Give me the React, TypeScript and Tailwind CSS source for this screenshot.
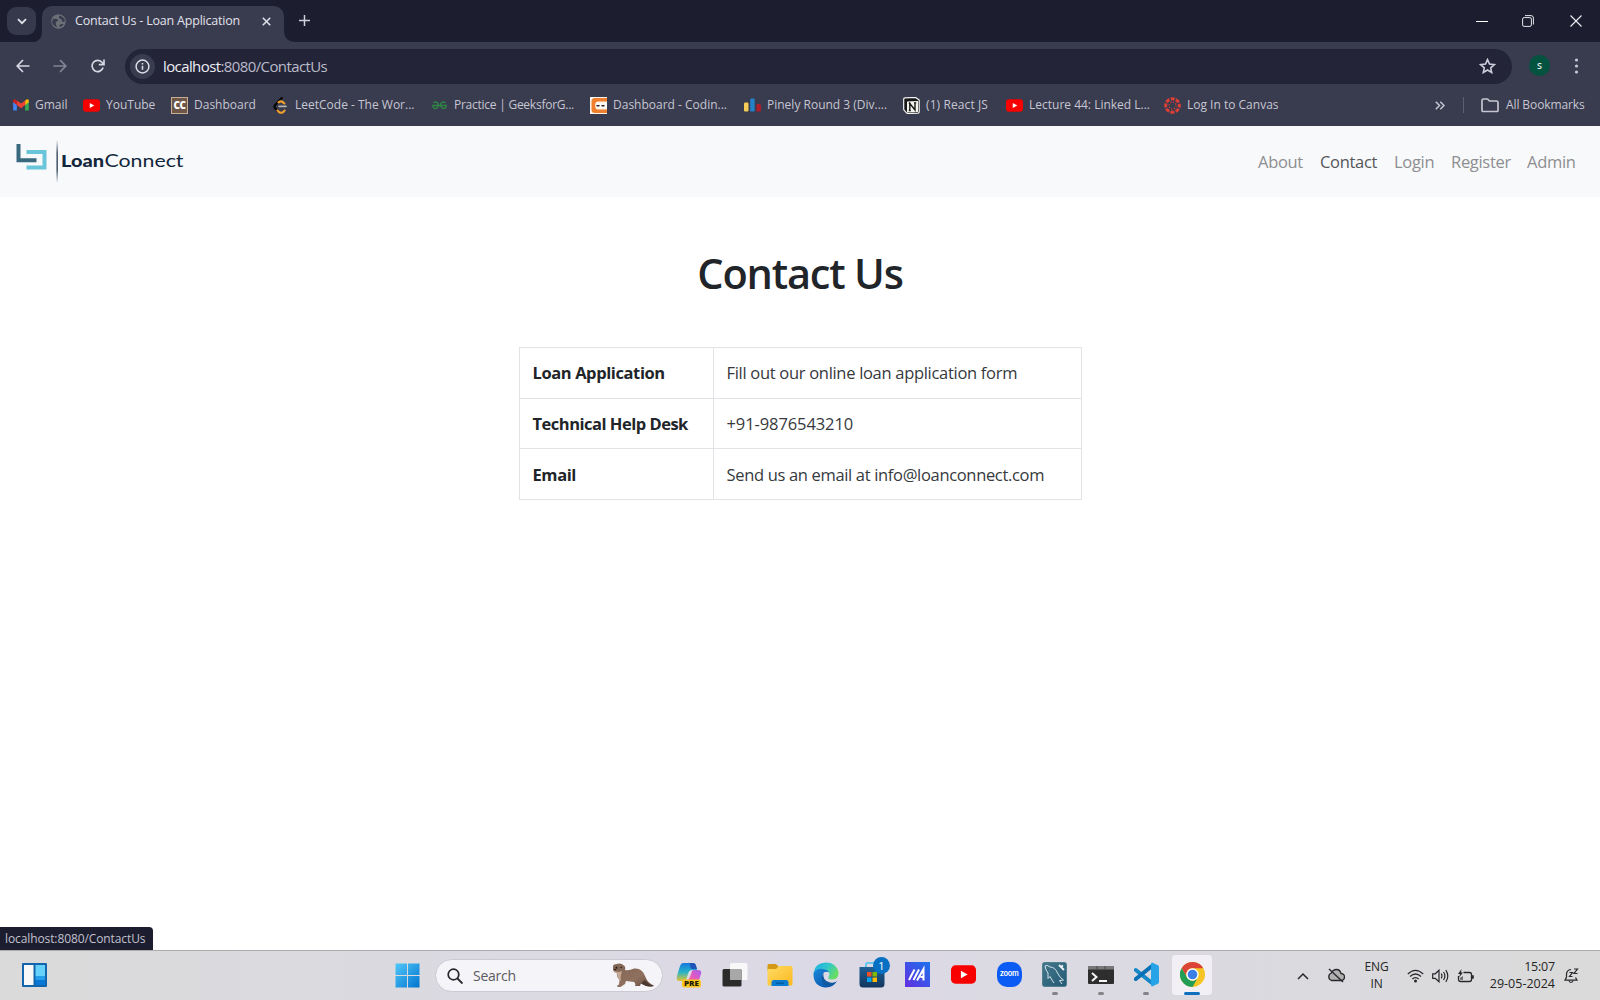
import type { ReactNode } from "react";

const Svg = ({ w, h = w, box, children }: { w: number; h?: number; box: string; children: ReactNode }) => (
  <svg width={w} height={h} viewBox={box} fill="none" className="shrink-0">{children}</svg>
);

const YouTube = ({ w, h }: { w: number; h: number }) => (
  <Svg w={w} h={h} box="0 0 26 19">
    <rect width="26" height="19" rx="4.5" fill="#f90000" />
    <path d="M10.3 5.6v7.8l7-3.9z" fill="#fff" />
  </Svg>
);

const Gmail = () => (
  <Svg w={16} h={12} box="0 0 17 13">
    <path d="M0 3v8.5Q0 12.5 1 12.5H4V5.5z" fill="#4285f4" />
    <path d="M13 5.5v7h3q1 0 1-1V3z" fill="#34a853" />
    <path d="M13 1.5L14.4.6Q17-.6 17 2.3V3.5L13 6.6z" fill="#fbbc04" />
    <path d="M4 1.5L8.5 5 13 1.5V6.6L8.5 10 4 6.6z" fill="#ea4335" />
    <path d="M0 3.5V2.3Q0-.6 2.6.6L4 1.5V6.6z" fill="#c5221f" />
  </Svg>
);

const CodeChef = () => (
  <div className="flex size-[17px] items-center justify-center border border-[#c9ad93] bg-[#6c5748] font-['Open_Sans',sans-serif] text-[10px] leading-none font-extrabold tracking-[-0.6px] text-white">CC</div>
);

const LeetCode = () => (
  <Svg w={16} h={17} box="0 0 16 17">
    <path d="M8.700 1L2 8.200Q.8 9.600 2 11L4.300 13.400" stroke="#050505" strokeWidth="2.200" strokeLinecap="round" />
    <path d="M4.500 13.400l1.600 1.700q2 1.400 4 0l1.500-1.500M5.500 5.300q2.500-1.800 4.300-.2l1.600 1.400" stroke="#f0a02b" strokeWidth="2.100" strokeLinecap="round" />
    <path d="M6 9.300h7" stroke="#b3b3b3" strokeWidth="1.800" strokeLinecap="round" />
  </Svg>
);

const Geeks = () => (
  <Svg w={15} h={9} box="0 0 15 9">
    <path d="M1.500 1.800Q3.500.2 5.300 1.600 7 3.200 6 5.600 4.600 8 2.500 7.300.8 6.600.7 4.500H14.300Q14.200 6.600 12.500 7.300 10.400 8 9 5.600 8 3.200 9.700 1.600 11.500.2 13.500 1.800" stroke="#2d8544" strokeWidth="1.400" />
  </Svg>
);

const CodingNinjas = () => (
  <Svg w={17} box="0 0 17 17">
    <rect width="17" height="17" fill="#fbf4ec" />
    <path d="M1.500 4.500Q1.500 1 5 1H17V4.500H8Q5.500 4.500 5.500 7v3q0 2.500 2.500 2.500H17V16H5Q1.500 16 1.500 12.500z" fill="#ef7f2d" />
    <path d="M5.500 6.500H17v4H5.500z" fill="#fff" />
    <path d="M6.500 8.300q1.500 1 3 0M11.500 8.300q1.500 1 3 0" stroke="#30211c" strokeWidth="1.500" />
  </Svg>
);

const Codeforces = () => (
  <Svg w={17} h={14} box="0 0 17 14">
    <rect y="4.500" width="4.500" height="9" rx="1.200" fill="#f5cd56" />
    <rect x="6.200" y=".5" width="4.500" height="13" rx="1.200" fill="#2482c8" />
    <rect x="12.400" y="6" width="4.500" height="7.500" rx="1.200" fill="#ae1e2b" />
  </Svg>
);

const Notion = () => (
  <Svg w={17} box="0 0 17 17">
    <path d="M.7 2Q.7 1 2 .9L12.500.4 16.200 3V15q0 1-1.200 1.100L5 16.600Q4 16.600 3.300 15.700L.7 12.600z" fill="#161616" stroke="#f4f4f4" strokeWidth="1.200" />
    <path d="M4 4.500L15 4V14.900L4 15.500z" fill="#f4f4ee" />
    <path d="M6.800 13.500V6.500l5.200 6.500V5.800M5.800 6.400h2M11 5.900h2.200M5.800 13.500h2" stroke="#161616" strokeWidth="1.400" />
  </Svg>
);

const Canvas = () => (
  <Svg w={17} box="0 0 17 17">
    <circle cx="8.500" cy="8.500" r="6.800" stroke="#dc3f35" strokeWidth="3" strokeDasharray="4 1.340" strokeDashoffset="2" />
    <circle cx="8.500" cy="8.500" r="3.500" stroke="#dc3f35" strokeWidth="1.300" strokeDasharray="1.100 1.649" />
  </Svg>
);

const Folder = () => (
  <Svg w={18} h={15} box="0 0 18 15">
    <path d="M1 12.500V2.500Q1 1 2.500 1H6.500L8.500 3H15.500Q17 3 17 4.500V12.500Q17 13.500 16 13.500H2Q1 13.500 1 12.500z" stroke="#c6c6d2" strokeWidth="1.700" strokeLinejoin="round" />
  </Svg>
);

const bookmarks: { name: string; cls: string; icon: ReactNode }[] = [
  { name: "Gmail", cls: "w-[71px]", icon: <Gmail /> },
  { name: "YouTube", cls: "w-[88px] tracking-[0px]", icon: <YouTube w={17} h={13} /> },
  { name: "Dashboard", cls: "w-[101px]", icon: <CodeChef /> },
  { name: "LeetCode - The Wor...", cls: "w-[159px] tracking-[0px]", icon: <LeetCode /> },
  { name: "Practice | GeeksforG...", cls: "w-[159px] tracking-[-0.25px]", icon: <Geeks /> },
  { name: "Dashboard - Codin...", cls: "w-[154px] tracking-[0px]", icon: <CodingNinjas /> },
  { name: "Pinely Round 3 (Div....", cls: "w-[159px] tracking-[0px]", icon: <Codeforces /> },
  { name: "(1) React JS", cls: "w-[103px] tracking-[0.1px]", icon: <Notion /> },
  { name: "Lecture 44: Linked L...", cls: "w-[158px]", icon: <YouTube w={17} h={13} /> },
  { name: "Log In to Canvas", cls: "w-[120px] tracking-[0px]", icon: <Canvas /> },
];

function TabStrip() {
  return (
    <div className="flex h-[42px] bg-[#1c1d2e]">
      <div className="mt-[7px] ml-[7px] flex h-7 w-[29px] items-center justify-center rounded-[9px] bg-[#36384b]">
        <Svg w={10} h={7} box="0 0 10 7"><path d="M1 1.200l4 4 4-4" stroke="#dedee8" strokeWidth="1.900" /></Svg>
      </div>
      <div className="flex h-full w-[261px] items-stretch">
        <Svg w={6} h={42} box="0 0 6 42"><path d="M-4 42Q6 42 6 31V42z" fill="#393b4e" /></Svg>
        <div className="mt-[6px] flex w-[242px] items-center rounded-t-[10px] bg-[#393b4e] pr-[13px] pb-[5px] pl-[9px]">
          <Svg w={15} box="0 0 15 15">
            <circle cx="7.500" cy="7.500" r="7.300" fill="#6c6f76" />
            <path d="M2 5q4-1 5 .8 0 2-2.200 2.200-.3 3 1.500 5.200Q2 12.500 1 8zM8.500 1.500q-1.700 2.500.8 3.200 2 .3 1.500 2.300 1 2 3.200.3Q13.500 3 8.500 1.500zM8.500 13q-.5-3 2.500-3l1.700.6Q11 13 8.500 13z" fill="#393b4e" />
          </Svg>
          <span className="ml-[9px] flex-1 text-[12.5px] tracking-[-0.2px] whitespace-nowrap text-[#e2e2ec]">Contact Us - Loan Application</span>
          <Svg w={9} box="0 0 9 9"><path d="M.8.8l7.400 7.400M8.200.8L.8 8.200" stroke="#dedee8" strokeWidth="1.600" /></Svg>
        </div>
        <Svg w={13} h={42} box="0 0 13 42"><path d="M0 30Q0 42 12 42H0z" fill="#393b4e" /></Svg>
      </div>
      <div className="mt-[15px] ml-[2px]">
        <Svg w={11} box="0 0 11 11"><path d="M5.500 0v11M0 5.500h11" stroke="#d0d0dc" strokeWidth="1.500" /></Svg>
      </div>
      <div className="mt-[14px] mr-[18px] ml-auto flex h-[13px] items-center">
        <Svg w={12} box="0 0 12 12"><path d="M0 6.500h12" stroke="#fff" strokeWidth="1" /></Svg>
        <div className="ml-[34px]">
          <Svg w={12} box="0 0 12 12"><rect x=".6" y="2.600" width="8.800" height="8.800" rx="1.500" stroke="#e6e6ec" /><path d="M3 .6h6Q11.400.6 11.400 3v6.500" stroke="#e6e6ec" /></Svg>
        </div>
        <div className="ml-9">
          <Svg w={12} box="0 0 12 12"><path d="M.5.5l11 11M11.500.5l-11 11" stroke="#f0f0f4" strokeWidth="1.100" /></Svg>
        </div>
      </div>
    </div>
  );
}

function Toolbar() {
  return (
    <div className="flex h-12 shrink-0 items-center bg-[#393b4e]">
      <div className="ml-[16px] flex w-[109px] items-center">
        <Svg w={14} box="0 0 14 14"><path d="M13.500 7H1.500M7 1L1.200 7 7 13" stroke="#d6d6e2" strokeWidth="1.700" /></Svg>
        <div className="ml-[23px]"><Svg w={14} box="0 0 14 14"><path d="M.5 7h12M7 1l5.800 6L7 13" stroke="#838594" strokeWidth="1.700" /></Svg></div>
        <div className="ml-[24px]"><Svg w={14} box="0 0 14 14"><path d="M12.100 8.500A5.600 5.600 0 1 1 11.200 3.600L12.500 5M13 .5V5.600H7.800" stroke="#d6d6e2" strokeWidth="1.700" /></Svg></div>
      </div>
      <div className="flex h-[35px] w-[1387px] items-center rounded-full bg-[#232438] pr-[16px] pl-[5px]">
        <div className="flex size-[25px] items-center justify-center rounded-full bg-[#393b4e]">
          <Svg w={15} box="0 0 15 15"><circle cx="7.500" cy="7.500" r="6.400" stroke="#dedee8" strokeWidth="1.500" /><path d="M7.500 6.700v4M7.500 3.900v1.500" stroke="#dedee8" strokeWidth="1.500" /></Svg>
        </div>
        <span className="ml-[8px] flex-1 text-[15px] tracking-[-0.6px] text-[#babbc8]"><span className="text-[#eeeef4]">localhost</span>:8080/ContactUs</span>
        <Svg w={17} h={16} box="0 0 17 16"><path d="M8.500 1.600L10.500 6.100 15.300 6.600 11.700 9.800 12.700 14.500 8.500 12 4.300 14.500 5.300 9.800 1.700 6.600 6.500 6.100z" stroke="#cccdda" strokeWidth="1.600" /></Svg>
      </div>
      <div className="mb-[1px] ml-[17px] flex size-[21px] items-center justify-center rounded-full bg-[#035340] text-[9px] font-semibold text-[#e8eeee]">S</div>
      <div className="ml-[24px]">
        <Svg w={5} h={16} box="0 0 5 16"><circle cx="2.500" cy="2" r="1.600" fill="#c8c9d5" /><circle cx="2.500" cy="8" r="1.600" fill="#c8c9d5" /><circle cx="2.500" cy="14" r="1.600" fill="#c8c9d5" /></Svg>
      </div>
    </div>
  );
}

function BookmarkBar() {
  return (
    <div className="flex h-9 shrink-0 items-start bg-[#393b4e] pl-[12px] text-[12px] text-[#c6c6d2]">
      {bookmarks.map((b) => (
        <div key={b.name} className={`flex h-[30px] shrink-0 items-center whitespace-nowrap ${b.cls}`}>
          <span className="flex w-[17px] shrink-0 justify-center">{b.icon}</span>
          <span className="ml-[6px]">{b.name}</span>
        </div>
      ))}
      <div className="mr-[14px] ml-auto flex h-[30px] items-center whitespace-nowrap">
        <Svg w={10} h={9} box="0 0 10 9"><path d="M.8.700l3.700 3.800L.8 8.300M5.300.700L9 4.500 5.300 8.300" stroke="#c6c6d2" strokeWidth="1.500" /></Svg>
        <div className="mr-[17px] ml-[18px] h-4 w-px bg-[#5d5f70]" />
        <Folder />
        <span className="ml-[7px] w-[80px] tracking-[-0.1px]">All Bookmarks</span>
      </div>
    </div>
  );
}

function Logo() {
  return (
    <div className="flex items-center">
      <Svg w={45} h={44} box="0 0 45 44">
        <defs>
          <linearGradient id="divider" x1="0" y1="0" x2="0" y2="1">
            <stop offset="0" stopColor="#26384e" stopOpacity="0" /><stop offset=".3" stopColor="#26384e" /><stop offset=".7" stopColor="#26384e" /><stop offset="1" stopColor="#26384e" stopOpacity="0" />
          </linearGradient>
        </defs>
        <path d="M10.500 13H28.500V28.500H10.500" transform="translate(0 -1)" stroke="#69c5d9" strokeWidth="4" />
        <path d="M2.500 4V20.300H20.500" stroke="#39697f" strokeWidth="4" />
        <rect x="40.500" y="0" width="1.300" height="43" fill="url(#divider)" />
      </Svg>
      <svg width="126" height="24" viewBox="0 0 126 24" className="-mt-[3px] overflow-visible font-['Lato',sans-serif]" fill="#12263c">
        <text x="0" y="18" fontSize="16.500" fontWeight="900" textLength="43" lengthAdjust="spacingAndGlyphs">Loan</text>
        <text x="43.500" y="18" fontSize="16.500" fontWeight="400" textLength="79" lengthAdjust="spacingAndGlyphs">Connect</text>
      </svg>
    </div>
  );
}

function Page() {
  return (
    <div className="flex min-h-0 flex-1 flex-col bg-white">
      <nav className="flex h-[71px] shrink-0 items-start justify-between bg-[#f8f9fb]">
        <div className="mt-[14px] ml-4"><Logo /></div>
        <div className="mt-[23px] mr-[24px] flex text-[16.5px] leading-[25px] tracking-[-0.3px] whitespace-nowrap text-[#8d8e90]">
          <span className="w-[62px]">About</span>
          <span className="w-[74px] text-[#555658]">Contact</span>
          <span className="w-[57px]">Login</span>
          <span className="w-[76px]">Register</span>
          <span className="w-[49px]">Admin</span>
        </div>
      </nav>
      <main className="flex flex-1 flex-col items-center text-[#212529]">
        <h1 className="mt-[48px] text-[41.5px] leading-[56px] font-semibold tracking-[-1.200px]">Contact Us</h1>
        <div className="mt-[46px] grid h-[153px] w-[563px] grid-cols-[194px_1fr] grid-rows-3 border-t border-l border-[#e1e3e6] text-[16.5px] whitespace-nowrap [&>div]:flex [&>div]:items-center [&>div]:border-r [&>div]:border-b [&>div]:border-[#e1e3e6] [&>div]:pt-[2px] [&>div]:pl-[13px]">
          <div className="font-bold tracking-[-0.4px]">Loan Application</div><div className="tracking-[-0.3px] text-[#36393d]">Fill out our online loan application form</div>
          <div className="font-bold tracking-[-0.5px]">Technical Help Desk</div><div className="tracking-[-0.1px] text-[#36393d]">+91-9876543210</div>
          <div className="font-bold tracking-[-0.4px]">Email</div><div className="tracking-[-0.33px] text-[#36393d]">Send us an email at info@loanconnect.com</div>
        </div>
      </main>
      <div className="flex h-[23px] w-[153px] items-center rounded-tr-[4px] bg-[#1c1d2e] pl-[5px] text-[12px] tracking-[-0.1px] text-[#c2c2d0]">localhost:8080/ContactUs</div>
    </div>
  );
}

const Otter = () => (
  <Svg w={42} h={25} box="0 0 42 25">
    <defs><linearGradient id="fur" x1="0" y1="0" x2="1" y2="1"><stop stopColor="#806454" /><stop offset=".6" stopColor="#90705e" /><stop offset="1" stopColor="#594239" /></linearGradient></defs>
    <path d="M1 4Q1 .8 4 1.200 9-.8 11.500 2.200 14 3 13 7 17 8 22 5.500 30 4.500 33 13 36 21 42 22.500 36 25 29 20.500L28 23H23Q24 20.500 22 19L14 18 13 21 8.500 24H5.500Q4.500 22.500 7 21.500L7.500 17Q4 13 5 10 1 9 1 6z" fill="url(#fur)" />
    <path d="M1.500 6Q3 9 7 9L10 8Q8 15 9 18 5 16 5 10 2 9 1.500 6z" fill="#c4a893" />
    <circle cx="4.500" cy="4.800" r="1" fill="#231a18" /><circle cx="9.200" cy="4.500" r=".8" fill="#231a18" /><ellipse cx="3" cy="6.600" rx="1.300" ry=".9" fill="#392722" />
    <path d="M29 20.500Q36 25 42 23 36 22 33 17z" fill="#4b3931" />
  </Svg>
);

const Copilot = () => (
  <Svg w={26} box="0 0 26 26">
    <defs>
      <linearGradient id="cpA" x1="0" y1="0" x2="0" y2="1"><stop stopColor="#1678de" /><stop offset=".5" stopColor="#27b4c8" /><stop offset="1" stopColor="#edc32c" /></linearGradient>
      <linearGradient id="cpB" x1="1" y1="0" x2="0" y2="1"><stop stopColor="#a85cf0" /><stop offset=".5" stopColor="#ec5bb5" /><stop offset="1" stopColor="#f17c43" /></linearGradient>
    </defs>
    <path d="M7 1H17Q20 1 20 5L21 8H16Q13 8 12 12L10 18Q9 20 7 19H3Q0 19 1 14L4 4Q5 1 7 1z" fill="url(#cpA)" />
    <path d="M12 1h5q3 0 4 6h-5q-2-1-2-4t-2-2z" fill="#2054b8" />
    <path d="M17 8H22Q26 8 25 12L23 18Q21 24 18 24H8Q7 22 8 18H11Q13 18 14 15L16 9z" fill="url(#cpB)" />
    <rect x="6" y="17.500" width="19" height="8" rx="2.500" fill="#fcc51c" />
    <text x="8" y="24" fontSize="7" fontWeight="800" textLength="15" lengthAdjust="spacingAndGlyphs" fill="#211b08">PRE</text>
  </Svg>
);

const TaskView = () => (
  <Svg w={26} box="0 0 26 26"><rect x="8" y="1" width="17.500" height="17" rx="1.500" fill="#f8f8f8" /><rect x=".5" y="7" width="19" height="17.500" rx="1.500" fill="#2b2b2b" /><path d="M8 7h11.500v11H8z" fill="#a8a8a8" /></Svg>
);

const Explorer = () => (
  <Svg w={26} box="0 0 26 26">
    <defs><linearGradient id="fold" x1="0" y1="0" x2="1" y2="1"><stop stopColor="#ffdb65" /><stop offset="1" stopColor="#fbb91f" /></linearGradient></defs>
    <path d="M.5 3.500Q.5 2 2 2H9L12 5V9H.5z" fill="#d59812" /><path d="M.5 7H9L12 4H24Q25.500 4 25.500 5.500V22Q25.500 23.500 24 23.500H2Q.5 23.500.5 22z" fill="url(#fold)" />
    <path d="M4.500 24V20.500Q4.500 18 7 18H19Q21.500 18 21.500 20.500V24z" fill="#087bd0" /><path d="M9 21.200h8" stroke="#075998" strokeWidth="1.300" />
  </Svg>
);

const Edge = () => (
  <Svg w={26} box="0 0 26 26">
    <defs>
      <linearGradient id="edA" x1="0" y1="0" x2="1" y2=".5"><stop stopColor="#1caee8" /><stop offset=".55" stopColor="#32c7cb" /><stop offset="1" stopColor="#68dd63" /></linearGradient>
      <linearGradient id="edB" x1="0" y1="0" x2="1" y2="1"><stop stopColor="#1688dc" /><stop offset="1" stopColor="#0a4a9e" /></linearGradient>
    </defs>
    <path d="M.5 11Q2 .5 13 .5 23 .5 25.500 10 26 17.500 19 17.500 14.500 17.500 15.500 15 17.500 12 15 9.500 7 4 .5 11z" fill="url(#edA)" />
    <path d="M.5 11Q4 6 10 7 14.500 7.500 16 10 10 8.500 9 14 9 21 17 21.500 21 22 24 19 20 26 12 25.500 0 24 .5 11z" fill="url(#edB)" />
    <path d="M10.500 10.500Q6.500 17 11.500 22.500 17 26 24 19.500 22 21 17 20.500 9 19 10.500 10.500z" fill="#10599e" />
  </Svg>
);

const Store = () => (
  <div className="relative">
    <Svg w={26} box="0 0 26 26">
      <defs><linearGradient id="st" x1="0" y1="0" x2="0" y2="1"><stop stopColor="#1f6097" /><stop offset="1" stopColor="#12365d" /></linearGradient></defs>
      <path d="M7 6V2.500Q7 1 8.500 1H17" stroke="#62c6ef" strokeWidth="2" />
      <path d="M.5 5H25.500V22Q25.500 25.500 22 25.500H4Q.5 25.500.5 22z" fill="url(#st)" />
      <path d="M8 10h4.500v4.500H8z" fill="#f25022" /><path d="M13.500 10H18v4.500h-4.500z" fill="#7fba00" /><path d="M8 15.500h4.500V20H8z" fill="#00a4ef" /><path d="M13.500 15.500H18V20h-4.500z" fill="#ffb900" />
    </Svg>
    <span className="absolute -top-[5px] left-[14px] flex size-[17px] items-center justify-center rounded-full bg-[#0870c2] text-[11px] leading-none text-white">1</span>
  </div>
);

const MyAsus = () => (
  <Svg w={25} box="0 0 25 25">
    <defs><linearGradient id="asus" x1="0" y1="1" x2="1" y2="0"><stop stopColor="#642ddf" /><stop offset="1" stopColor="#1974ef" /></linearGradient></defs>
    <rect width="25" height="25" fill="url(#asus)" />
    <path d="M4 18L9.500 7.500M8.500 18L14 7.500M12 18.500L18.500 7V18.500M15.500 15H19" stroke="#fff" strokeWidth="2" />
  </Svg>
);

const Zoom = () => (
  <div className="flex size-[25px] items-center justify-center rounded-[10px] bg-[#0b5cf4] pb-[1px] font-[Inter,sans-serif] text-[7.5px] leading-none font-semibold tracking-[-0.3px] text-white">zoom</div>
);

const MySql = () => (
  <Svg w={25} box="0 0 25 25">
    <defs><linearGradient id="sql" x1="0" y1="0" x2="1" y2="1"><stop stopColor="#44778b" /><stop offset="1" stopColor="#255a74" /></linearGradient></defs>
    <rect x=".5" y=".5" width="24" height="24" rx="2" fill="url(#sql)" stroke="#527f91" />
    <path d="M3 4Q5 2 8 5 13 5 15.500 11 18 16 21.500 18L17.500 18.500 20 22M3 4Q3.500 8 6 11V16.500L8 14.500Q11 20 12 21" stroke="#d5e4e8" strokeWidth="1" />
    <path d="M17 3l2 2 2-1.500M19 5l3 3" stroke="#eef3f5" strokeWidth="1.800" />
  </Svg>
);

const Terminal = () => (
  <Svg w={26} h={18} box="0 0 26 18"><rect width="26" height="18" rx="1" fill="#2e2e2f" /><path d="M0 0h26v3.500H0z" fill="#77787a" /><path d="M9 0v3.500M17 0v3.500" stroke="#48494a" /><path d="M4 7l4.500 4L4 15M11 15h8" stroke="#f4f4f4" strokeWidth="2" /></Svg>
);

const VSCode = () => (
  <Svg w={25} box="0 0 25 25">
    <path d="M1.800 8L18 21" stroke="#1688c9" strokeWidth="4" strokeLinecap="round" /><path d="M1.800 17L18 4" stroke="#0870b5" strokeWidth="4" strokeLinecap="round" />
    <path d="M18 .5L24 3.300Q25 4 25 5V20Q25 21 24 21.700L18 24.500Q17 24 17 23V2Q17 1 18 .5z" fill="#27a3e8" />
  </Svg>
);

const Chrome = () => (
  <Svg w={25} box="0 0 25 25">
    <circle cx="12.500" cy="12.500" r="12.500" fill="#f6c524" />
    <path d="M1.670 6.250A12.500 12.500 0 0 1 23.330 6.250H12.500A6.250 6.250 0 0 0 7.080 15.620z" fill="#db4437" />
    <path d="M1.670 6.250A12.500 12.500 0 0 0 12.500 25L17.910 15.620A6.250 6.250 0 0 1 7.080 15.620z" fill="#219d55" />
    <circle cx="12.500" cy="12.500" r="6.200" fill="#fff" /><circle cx="12.500" cy="12.500" r="4.800" fill="#3d7fe8" />
  </Svg>
);

const apps: { id: string; icon: ReactNode; state?: "open" | "active" }[] = [
  { id: "copilot", icon: <Copilot /> }, { id: "taskview", icon: <TaskView /> }, { id: "explorer", icon: <Explorer /> },
  { id: "edge", icon: <Edge /> }, { id: "store", icon: <Store /> }, { id: "asus", icon: <MyAsus /> },
  { id: "youtube", icon: <YouTube w={25} h={19} /> }, { id: "zoom", icon: <Zoom /> },
  { id: "mysql", icon: <MySql />, state: "open" }, { id: "terminal", icon: <Terminal />, state: "open" },
  { id: "vscode", icon: <VSCode />, state: "open" }, { id: "chrome", icon: <Chrome />, state: "active" },
];

function Taskbar() {
  return (
    <footer className="flex h-[50px] shrink-0 border-t border-[#acacae] bg-linear-to-r from-[#dadada] via-[#dcd9e6] to-[#dadada] text-[#252525]">
      <div className="mt-[12px] ml-[22px] w-[373px]">
        <Svg w={25} h={24} box="0 0 25 24"><rect width="25" height="24" rx="1" fill="#1264ad" /><path d="M2 2h9.500v20H2z" fill="#f8f8f8" /><path d="M13.500 2H23v11H13.500z" fill="#66d2fc" /><path d="M13.500 13H23v4H13.500z" fill="#249eea" /><path d="M13.500 17H23v5H13.500z" fill="#0978d5" /></Svg>
      </div>
      <div className="mt-[12px]">
        <Svg w={25} box="0 0 25 25">
          <defs><linearGradient id="win" x1="0" y1="0" x2="1" y2="1"><stop stopColor="#50c8fa" /><stop offset="1" stopColor="#0374ce" /></linearGradient></defs>
          <path d="M.5.500H12v11.500H.5zM13 .5h11.500v11.500H13zM.5 13H12v11.500H.5zM13 13h11.500v11.500H13z" fill="url(#win)" />
        </Svg>
      </div>
      <div className="mt-[8px] ml-[15px] flex h-[33px] w-[228px] items-center rounded-full border border-[#cbc9d3] bg-[#f5f4f8] pr-[8px] pl-[11px]">
        <Svg w={16} box="0 0 16 16"><circle cx="6.500" cy="6.500" r="5.300" stroke="#28282c" strokeWidth="1.700" /><path d="M10.500 10.500l5 5" stroke="#28282c" strokeWidth="1.900" /></Svg>
        <span className="ml-[10px] flex-1 text-[14px] tracking-[-0.25px] text-[#5b5b5f]">Search</span>
        <Otter />
      </div>
      <div className="ml-[3px] flex">
        {apps.map((a) => (
          <div key={a.id} className="flex w-[45.75px] shrink-0 flex-col items-center">
            <div className={`mt-[4px] flex h-10 w-10 flex-col items-center rounded-[4px] ${a.state === "active" ? "bg-[#f2f0f5]" : ""}`}>
              <div className="flex h-[39px] items-center">{a.icon}</div>
            </div>
            {a.state === "open" && <div className="-mt-[3px] h-[3px] w-[6px] rounded-full bg-[#858387]" />}
            {a.state === "active" && <div className="-mt-[3px] h-[3px] w-4 rounded-full bg-[#1170be]" />}
          </div>
        ))}
      </div>
      <div className="mr-[21px] ml-auto flex items-center text-[12px] leading-[17px]">
        <Svg w={12} h={8} box="0 0 12 8"><path d="M1 7l5-5 5 5" stroke="#28282c" strokeWidth="1.500" /></Svg>
        <div className="ml-[18px]"><Svg w={18} h={15} box="0 0 18 15"><path d="M4.500 12.500A4 4 0 0 1 4.300 5Q6 1.500 9.500 1.500T14 5.500A3.500 3.500 0 0 1 14 12.500z" fill="#b1b1b2" stroke="#28282c" strokeWidth="1.300" /><path d="M2 1l14 13" stroke="#28282c" strokeWidth="1.400" /></Svg></div>
        <div className="-mt-[2px] ml-[18px] w-[27px] text-center tracking-[-0.2px]"><div>ENG</div><div>IN</div></div>
        <div className="ml-[17px]"><Svg w={17} h={14} box="0 0 17 14"><path d="M.8 5Q8.500-2.300 16.200 5M3 7.500q5.500-5 11 0M5.300 10q3.200-2.800 6.400 0" stroke="#28282c" strokeWidth="1.200" /><circle cx="8.500" cy="12" r="1.500" fill="#28282c" /></Svg></div>
        <div className="ml-[8px]"><Svg w={17} h={14} box="0 0 17 14"><path d="M.7 4.800h2.500L7 1.200v11.600L3.200 9.300H.7zM9.200 4.700q1.600 2.300 0 4.600M11.500 3q2.800 4 0 8M13.800 1.200q4 5.800 0 11.600" stroke="#28282c" strokeWidth="1.200" /></Svg></div>
        <div className="ml-[8px]"><Svg w={17} h={14} box="0 0 17 14"><path d="M6.500 3.500h6Q14.500 3.500 14.500 5.500V10.500Q14.500 12.500 12.500 12.500H3.500Q1.500 12.500 1.500 10.500V7" stroke="#28282c" strokeWidth="1.300" /><path d="M15 6.200h1.800v3.500H15zM4.500 0L1 5h2L2 8.500 6 3.500H4z" fill="#28282c" /><path d="M3 10.800V9l3-2v3.800z" fill="#666" /></Svg></div>
        <div className="-mt-[2px] ml-[14px] w-[67px] text-right text-[12.5px] tracking-[0px] whitespace-nowrap"><div className="tracking-[-0.2px]">15:07</div><div>29-05-2024</div></div>
        <div className="ml-[9px]"><Svg w={15} h={16} box="0 0 15 16"><path d="M7 1.500Q2.500 2 2.500 6.500V9L1 12.200H13L11.500 9.500M5 13Q7 16 9 13" stroke="#28282c" strokeWidth="1.200" /><path d="M5.500 4.500h3L5.500 8.500h3M10 1h3.500L10 5.500h3.500" stroke="#28282c" strokeWidth="1.200" /></Svg></div>
      </div>
    </footer>
  );
}

export default function App() {
  return (
    <div className="flex h-[1000px] w-[1600px] flex-col overflow-hidden font-['Open_Sans','Noto_Sans',sans-serif]">
      <TabStrip />
      <Toolbar />
      <BookmarkBar />
      <Page />
      <Taskbar />
    </div>
  );
}
